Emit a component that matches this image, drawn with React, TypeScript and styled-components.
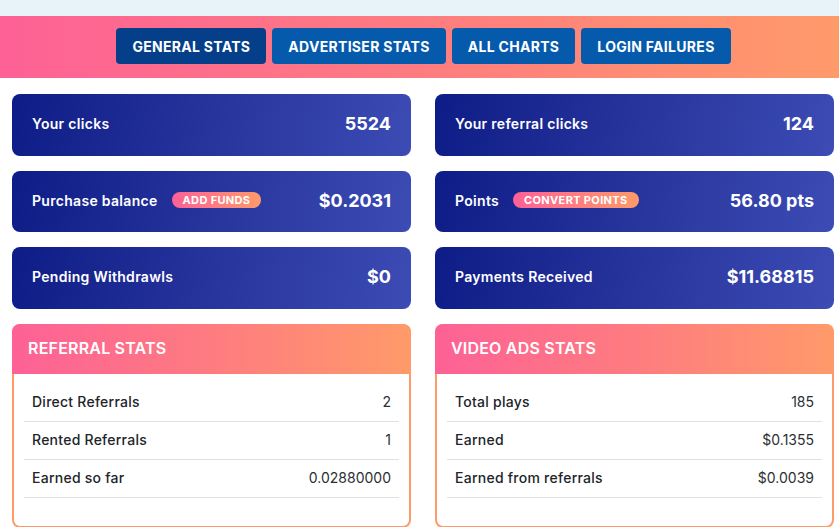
import styled, { createGlobalStyle } from 'styled-components';

const GlobalStyle = createGlobalStyle`
  * { box-sizing: border-box; }
  body {
    margin: 0;
    background: #ffffff;
    font-family: Inter, "Open Sans", Arial, sans-serif;
  }
`;

const TopStrip = styled.div`
  height: 16px;
  background: #e8f2f9;
`;

const Header = styled.nav`
  display: flex;
  justify-content: center;
  gap: 6px;
  height: 62px;
  padding: 12px 0 0 8px;
  background: linear-gradient(90deg, #fd6196 0%, #fe7c80 50%, #ff9a6a 100%);
`;

const TabButton = styled.button<{ $active?: boolean }>`
  height: 36px;
  padding: 0 16px;
  border: none;
  border-radius: 4px;
  background: ${(p) => (p.$active ? '#053f8a' : '#055aac')};
  color: #ffffff;
  font-family: inherit;
  font-size: 14px;
  font-weight: 700;
  letter-spacing: 0.3px;
  cursor: pointer;
`;

const Content = styled.main`
  display: grid;
  grid-template-columns: 1fr 1fr;
  column-gap: 24px;
  row-gap: 15px;
  padding: 16px 5px 0 12px;
`;

const StatCard = styled.div`
  display: flex;
  align-items: center;
  height: 61.5px;
  padding: 0 20px 2px;
  border-radius: 8px;
  background: linear-gradient(100deg, #0e1c87 0%, #27349c 50%, #3c4cb4 100%);
  color: #ffffff;
`;

const CardLabel = styled.span`
  font-size: 14px;
  font-weight: 600;
  letter-spacing: 0.3px;
`;

const CardValue = styled.span`
  margin-left: auto;
  font-size: 18px;
  font-weight: 700;
`;

const Badge = styled.span`
  display: inline-flex;
  align-items: center;
  height: 16px;
  margin-left: 14px;
  padding: 0 11px;
  border-radius: 8px;
  background: linear-gradient(90deg, #fd6196 0%, #ff9a6a 100%);
  font-size: 11px;
  font-weight: 700;
  letter-spacing: 0.35px;
  text-transform: uppercase;
`;

const Panel = styled.section`
  height: 204px;
  border-radius: 8px;
  overflow: hidden;
  background: #ffffff;
  box-shadow: inset 0 0 0 2px #fe9b6c;
`;

const PanelHeader = styled.h3`
  display: flex;
  align-items: center;
  height: 50px;
  margin: 0;
  padding: 0 16px 2px;
  background: linear-gradient(90deg, #fd6196 0%, #fe7c80 50%, #ff9a6a 100%);
  color: #ffffff;
  font-size: 16px;
  font-weight: 600;
  letter-spacing: 0.2px;
  text-transform: uppercase;
`;

const PanelBody = styled.div`
  padding: 10px 12px 0 12px;
`;

const Row = styled.div`
  display: flex;
  align-items: center;
  height: 38px;
  padding: 0 8px 1px;
  border-bottom: 1px solid #dee2e6;
  color: #212529;
  font-size: 14px;
`;

const RowLabel = styled.span`
  font-weight: 500;
  letter-spacing: 0.25px;
`;

const RowValue = styled.span`
  margin-left: auto;
  font-weight: 400;
  color: #2b2f33;
`;

const tabs = ['General stats', 'Advertiser stats', 'All charts', 'Login failures'];

const cards = [
  { label: 'Your clicks', value: '5524' },
  { label: 'Your referral clicks', value: '124' },
  { label: 'Purchase balance', value: '$0.2031', badge: 'Add funds' },
  { label: 'Points', value: '56.80 pts', badge: 'Convert points' },
  { label: 'Pending Withdrawls', value: '$0' },
  { label: 'Payments Received', value: '$11.68815' },
];

const panels = [
  {
    title: 'Referral stats',
    rows: [
      ['Direct Referrals', '2'],
      ['Rented Referrals', '1'],
      ['Earned so far', '0.02880000'],
    ],
  },
  {
    title: 'Video ads stats',
    rows: [
      ['Total plays', '185'],
      ['Earned', '$0.1355'],
      ['Earned from referrals', '$0.0039'],
    ],
  },
];

const App = () => {
  return (
    <>
      <GlobalStyle />
      <TopStrip />
      <Header>
        {tabs.map((t, i) => (
          <TabButton key={t} $active={i === 0}>
            {t.toUpperCase()}
          </TabButton>
        ))}
      </Header>
      <Content>
        {cards.map((c) => (
          <StatCard key={c.label}>
            <CardLabel>{c.label}</CardLabel>
            {c.badge && <Badge>{c.badge}</Badge>}
            <CardValue>{c.value}</CardValue>
          </StatCard>
        ))}
        {panels.map((p) => (
          <Panel key={p.title}>
            <PanelHeader>{p.title}</PanelHeader>
            <PanelBody>
              {p.rows.map(([label, value]) => (
                <Row key={label}>
                  <RowLabel>{label}</RowLabel>
                  <RowValue>{value}</RowValue>
                </Row>
              ))}
            </PanelBody>
          </Panel>
        ))}
      </Content>
    </>
  );
};

export default App;
